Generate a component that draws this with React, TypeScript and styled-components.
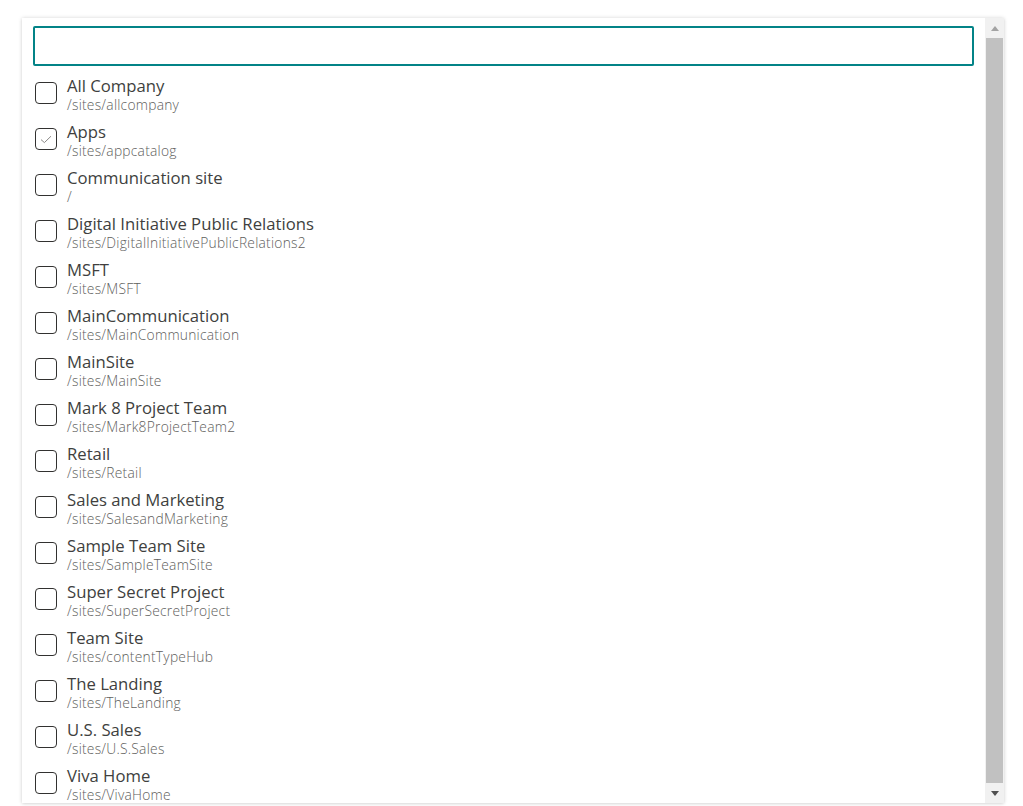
import React from 'react';
import styled, { createGlobalStyle } from 'styled-components';

const GlobalStyle = createGlobalStyle`
	html, body {
		margin: 0;
		padding: 0;
		background: #ffffff;
		font-family: 'Open Sans', 'Noto Sans', sans-serif;
	}
`;

const Page = styled.div`
	width: 1023px;
	height: 806px;
	padding: 18px 19px 3px 22px;
	box-sizing: border-box;
`;

const Panel = styled.div`
	display: flex;
	height: 785px;
	background: #ffffff;
	box-shadow: 0 0 4px rgba(0, 0, 0, 0.14), 0 1px 3px rgba(0, 0, 0, 0.08);
	overflow: hidden;
`;

const Content = styled.div`
	flex: 1;
	min-width: 0;
	padding: 8px 11px 0 11px;
	overflow: hidden;
`;

const SearchInput = styled.input`
	display: block;
	width: 100%;
	height: 40px;
	box-sizing: border-box;
	border: 2px solid #038387;
	border-radius: 2px;
	outline: none;
	padding: 0 8px;
	font-family: inherit;
	font-size: 14px;
`;

const List = styled.ul`
	list-style: none;
	margin: 10px 0 0 0;
	padding: 0;
`;

const Row = styled.li`
	display: flex;
	align-items: flex-start;
	gap: 10px;
	height: 46px;
	padding-left: 2px;
`;

const Box = styled.span`
	flex: none;
	display: flex;
	align-items: center;
	justify-content: center;
	width: 22px;
	height: 22px;
	margin-top: 6px;
	box-sizing: border-box;
	border: 1px solid #323130;
	border-radius: 4px;
	background: #ffffff;
`;

const Texts = styled.div`
	display: flex;
	flex-direction: column;
`;

const Title = styled.span`
	font-size: 16.7px;
	line-height: 20px;
	color: #403f3e;
	white-space: nowrap;
`;

const Sub = styled.span`
	font-size: 13.8px;
	font-weight: 300;
	line-height: 17px;
	color: #605e5c;
	white-space: nowrap;
	letter-spacing: 0.25px;
`;

const Scrollbar = styled.div`
	flex: none;
	width: 19px;
	display: flex;
	flex-direction: column;
	background: #f1f1f1;
	padding: 0 1px;
	box-sizing: border-box;
`;

const Arrow = styled.div`
	height: 20px;
	display: flex;
	align-items: center;
	justify-content: center;
`;

const Thumb = styled.div`
	flex: 1;
	background: #c1c1c1;
`;

const sites = [
	['All Company', '/sites/allcompany'],
	['Apps', '/sites/appcatalog'],
	['Communication site', '/'],
	['Digital Initiative Public Relations', '/sites/DigitalInitiativePublicRelations2'],
	['MSFT', '/sites/MSFT'],
	['MainCommunication', '/sites/MainCommunication'],
	['MainSite', '/sites/MainSite'],
	['Mark 8 Project Team', '/sites/Mark8ProjectTeam2'],
	['Retail', '/sites/Retail'],
	['Sales and Marketing', '/sites/SalesandMarketing'],
	['Sample Team Site', '/sites/SampleTeamSite'],
	['Super Secret Project', '/sites/SuperSecretProject'],
	['Team Site', '/sites/contentTypeHub'],
	['The Landing', '/sites/TheLanding'],
	['U.S. Sales', '/sites/U.S.Sales'],
	['Viva Home', '/sites/VivaHome'],
];

function Check(): React.ReactElement {
	return (
		<svg width="14" height="14" viewBox="0 0 14 14">
			<path d="M2 7.6 L5.4 10.6 L12 4.2" fill="none" stroke="#8a8886" strokeWidth="1" />
		</svg>
	);
}

export default function App(): React.ReactElement {
	return (
		<>
			<GlobalStyle />
			<Page>
				<Panel>
					<Content>
						<SearchInput type="text" />
						<List>
							{sites.map(([title, url]) => (
								<Row key={title}>
									<Box>{title === 'Apps' && <Check />}</Box>
									<Texts>
										<Title>{title}</Title>
										<Sub>{url}</Sub>
									</Texts>
								</Row>
							))}
						</List>
					</Content>
					<Scrollbar>
						<Arrow>
							<svg width="8" height="5" viewBox="0 0 8 5">
								<path d="M0 5 L4 0 L8 5 Z" fill="#a3a3a3" />
							</svg>
						</Arrow>
						<Thumb />
						<Arrow>
							<svg width="8" height="5" viewBox="0 0 8 5">
								<path d="M0 0 L8 0 L4 5 Z" fill="#505050" />
							</svg>
						</Arrow>
					</Scrollbar>
				</Panel>
			</Page>
		</>
	);
}
